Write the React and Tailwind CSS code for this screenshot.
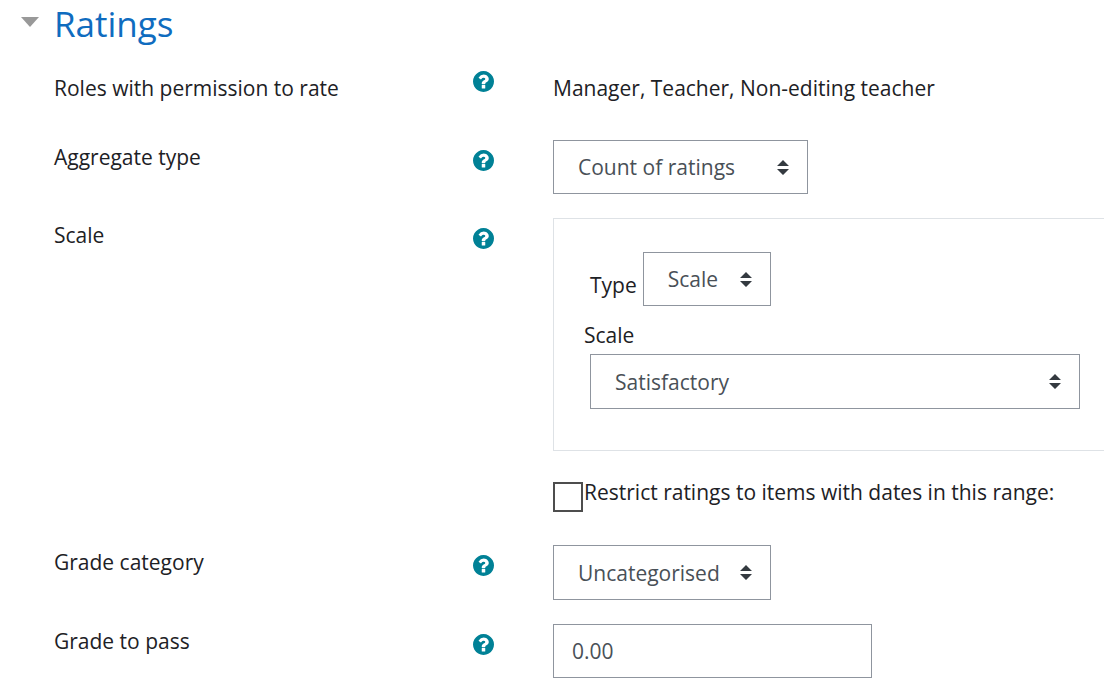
import React from 'react';

const HelpButton = ({ topic }) => (
    <button type="button" aria-label={`Help with ${topic}`} className="mt-[10px] shrink-0 text-[#008196]">
        <svg viewBox="128 128 1536 1536" className="block h-[21px] w-[21px]" fill="currentColor" aria-hidden="true">
            <path d="M1024 1376v-192q0-14-9-23t-23-9h-192q-14 0-23 9t-9 23v192q0 14 9 23t23 9h192q14 0 23-9t9-23zm256-672q0-88-55.5-163t-138.5-116-170-41q-243 0-371 213-15 24 8 42l132 100q7 6 19 6 16 0 25-12 53-68 86-92 34-24 86-24 48 0 85.5 26t37.5 59q0 38-20 61t-68 45q-63 28-115.5 86.5t-52.5 125.5v36q0 14 9 23t23 9h192q14 0 23-9t9-23q0-19 21.5-49.5t54.5-49.5q32-18 49-28.5t46-35 44.5-48 28-60.5 12.5-81zm384 192q0 209-103 385.5t-279.5 279.5-385.5 103-385.5-103-279.5-279.5-103-385.5 103-385.5 279.5-279.5 385.5-103 385.5 103 279.5 279.5 103 385.5z" />
        </svg>
    </button>
);

const Select = ({ id, options, className }) => (
    <div className={`relative ${className}`}>
        <select
            id={id}
            className="h-full w-full appearance-none border border-[#8f959e] bg-white pl-6 pr-10 text-[#495057]"
        >
            {options.map((option) => (
                <option key={option}>{option}</option>
            ))}
        </select>
        <svg
            viewBox="0 0 4 5"
            className="pointer-events-none absolute inset-y-0 right-[19px] my-auto h-[15px] w-3"
            fill="#343a40"
            aria-hidden="true"
        >
            <path d="M2 0L0 2h4zm0 5L0 3h4z" />
        </svg>
    </div>
);

const FormRow = ({ label, htmlFor, labelClassName = '', children }) => (
    <div className="grid grid-cols-2 pl-0.5">
        <div className="flex items-start justify-between pl-[52px] pr-[59px]">
            {htmlFor ? (
                <label htmlFor={htmlFor}>{label}</label>
            ) : (
                <span className={labelClassName}>{label}</span>
            )}
            {label && <HelpButton topic={label} />}
        </div>
        <div className="min-w-0">{children}</div>
    </div>
);

const App = () => {
    return (
        <form className="min-h-screen bg-white pb-4 font-['Open_Sans','Noto_Sans',sans-serif] text-[21px] leading-[34px] text-[#1d2125]">
            <h2 className="h-[61px] pl-[21px] text-[35px] leading-[48px] text-[#0f6cbf]">
                <button type="button" aria-expanded="true" className="flex items-center gap-[15px]">
                    <svg viewBox="0 0 18 10" className="mb-1 h-[10px] w-[18px]" fill="#999999" aria-hidden="true">
                        <path d="M0 0h18L9 10z" />
                    </svg>
                    Ratings
                </button>
            </h2>

            <div className="flex flex-col gap-6">
                <FormRow label="Roles with permission to rate" labelClassName="pt-[10px]">
                    <p className="h-[55px] pt-[10px] whitespace-nowrap">Manager, Teacher, Non-editing teacher</p>
                </FormRow>

                <FormRow label="Aggregate type" htmlFor="aggregate">
                    <Select id="aggregate" options={['Count of ratings']} className="h-[54px] w-[255px]" />
                </FormRow>

                <FormRow label="Scale">
                    <div className="h-[233px] border-y border-l border-[#dee2e6] pl-[30px] pr-6 pt-[33px]">
                        <div className="flex items-end gap-1.5 pl-1.5">
                            <label htmlFor="scale-type" className="mb-1">Type</label>
                            <Select id="scale-type" options={['Scale']} className="h-[54px] w-32" />
                        </div>
                        <label htmlFor="scale" className="mt-3 mb-0.5 block">Scale</label>
                        <Select id="scale" options={['Satisfactory']} className="ml-1.5 h-[55px]" />
                    </div>
                </FormRow>

                <FormRow>
                    <div className="flex h-[46px] items-start gap-px">
                        <input
                            id="restrict"
                            type="checkbox"
                            className="mt-[7px] h-[30px] w-[30px] shrink-0 appearance-none border-2 border-[#4d4d4d] bg-white checked:bg-[#0f6cbf]"
                        />
                        <label htmlFor="restrict" className="whitespace-nowrap">
                            Restrict ratings to items with dates in this range:
                        </label>
                    </div>
                </FormRow>

                <FormRow label="Grade category" htmlFor="category">
                    <Select id="category" options={['Uncategorised']} className="h-[55px] w-[218px]" />
                </FormRow>

                <FormRow label="Grade to pass" htmlFor="gradepass">
                    <input
                        id="gradepass"
                        type="text"
                        defaultValue="0.00"
                        className="block h-[54px] w-[319px] border border-[#8f959e] bg-white px-[18px] text-[#495057]"
                    />
                </FormRow>
            </div>
        </form>
    );
};

export default App;
